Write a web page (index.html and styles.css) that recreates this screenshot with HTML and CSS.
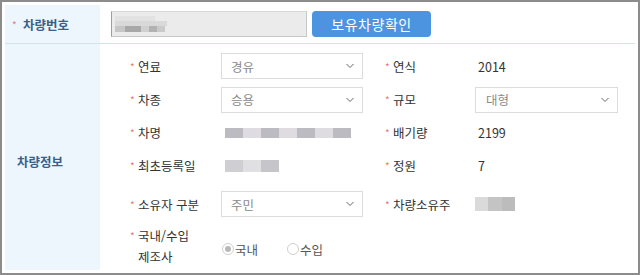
FILE: index.html
```html
<!DOCTYPE html>
<html lang="ko">
<head>
  <meta charset="UTF-8">
  <title>차량정보</title>
  <link rel="stylesheet" href="styles.css">
</head>
<body>
  <div class="frame">
    <div class="row row-top">
      <div class="head"><span class="req">*</span>차량번호</div>
      <div class="top-body">
        <div class="plate-input">
          <div class="mosaic plate-mosaic">
            <span class="m1"></span><span class="m2"></span><span class="m3"></span>
          </div>
        </div>
        <button class="btn" type="button">보유차량확인</button>
      </div>
    </div>

    <div class="row row-info">
      <div class="head head-info">차량정보</div>
      <div class="form-grid">
        <div class="label"><span class="req">*</span><span>연료</span></div>
        <div class="field"><div class="select">경유<svg class="chev" width="10" height="6" viewBox="0 0 10 6"><polyline points="1.5,1 5,4.5 8.5,1" /></svg></div></div>
        <div class="label"><span class="req">*</span><span>연식</span></div>
        <div class="field value">2014</div>

        <div class="label"><span class="req">*</span><span>차종</span></div>
        <div class="field"><div class="select">승용<svg class="chev" width="10" height="6" viewBox="0 0 10 6"><polyline points="1.5,1 5,4.5 8.5,1" /></svg></div></div>
        <div class="label"><span class="req">*</span><span>규모</span></div>
        <div class="field"><div class="select select-wide">대형<svg class="chev" width="10" height="6" viewBox="0 0 10 6"><polyline points="1.5,1 5,4.5 8.5,1" /></svg></div></div>

        <div class="label"><span class="req">*</span><span>차명</span></div>
        <div class="field"><div class="mosaic name-mosaic"><span></span><span></span><span></span><span></span><span></span><span></span><span></span></div></div>
        <div class="label"><span class="req">*</span><span>배기량</span></div>
        <div class="field value">2199</div>

        <div class="label"><span class="req">*</span><span>최초등록일</span></div>
        <div class="field"><div class="mosaic date-mosaic"><span></span><span></span><span></span></div></div>
        <div class="label"><span class="req">*</span><span>정원</span></div>
        <div class="field value">7</div>

        <div class="label"><span class="req">*</span><span>소유자 구분</span></div>
        <div class="field"><div class="select">주민<svg class="chev" width="10" height="6" viewBox="0 0 10 6"><polyline points="1.5,1 5,4.5 8.5,1" /></svg></div></div>
        <div class="label"><span class="req">*</span><span>차량소유주</span></div>
        <div class="field"><div class="mosaic owner-mosaic"><span></span><span></span><span></span></div></div>

        <div class="label label-two"><span class="req">*</span><span>국내/수입<br>제조사</span></div>
        <div class="field radios">
          <label class="radio"><span class="dot checked"></span>국내</label>
          <label class="radio"><span class="dot"></span>수입</label>
        </div>
      </div>
    </div>
  </div>
</body>
</html>
```

FILE: styles.css
```css
body {
  margin: 0;
  font-family: "Noto Sans CJK KR", "Noto Sans", sans-serif;
  color: #333;
  background: #fff;
}
.frame {
  width: 640px;
  height: 275px;
  box-sizing: border-box;
  border: 2px solid #8c8c8c;
  padding: 3px;
}
.row {
  display: flex;
}
.row-top {
  height: 38px;
  border-bottom: 1px solid #cfe5ec;
}
.head {
  width: 95px;
  box-sizing: border-box;
  background: #edf5fd;
  display: flex;
  align-items: center;
  padding-left: 7px;
  font-size: 12.5px;
  font-weight: bold;
  color: #3b5f86;
}
.head .req {
  margin-right: 3px;
}
.req {
  color: #e57b7b;
  font-size: 10px;
  font-weight: normal;
  width: 8px;
  flex: none;
}
.top-body {
  display: flex;
  align-items: center;
  gap: 5px;
  padding-left: 11px;
}
.plate-input {
  width: 196px;
  height: 26px;
  box-sizing: border-box;
  background: #ebebeb;
  border: 1px solid #c8c8c8;
  border-left-color: #9e9e9e;
  border-top-color: #d8d8d8;
  display: flex;
  align-items: center;
  padding-left: 3px;
}
.btn {
  width: 119px;
  height: 26px;
  border: none;
  border-radius: 4px;
  background: #4d94e0;
  color: #fff;
  font-family: inherit;
  font-size: 14px;
  padding: 0;
  letter-spacing: 0.5px;
}

.row-info {
  height: 226px;
}
.head-info {
  padding-left: 12px;
  padding-top: 8px;
}
.form-grid {
  display: grid;
  grid-template-columns: 91px 164px 90px 143px;
  grid-template-rows: 34px 33px 33px 33px 44px 1fr;
  align-items: center;
  padding: 5px 0 0 30px;
  font-size: 12.5px;
}
.label {
  display: flex;
  align-items: center;
  color: #333;
}
.label-two {
  align-items: flex-start;
  line-height: 21px;
  margin-top: -4px;
}
.value {
  padding-left: 3px;
  color: #333;
}
.select {
  width: 142px;
  height: 26px;
  box-sizing: border-box;
  border: 1px solid #dcdcdc;
  background: #fff;
  display: flex;
  align-items: center;
  justify-content: space-between;
  padding: 0 7px 0 9px;
  color: #8a8a8a;
}
.select-wide {
  width: 143px;
  padding-left: 10px;
}
.chev polyline {
  fill: none;
  stroke: #666;
  stroke-width: 1;
}

.mosaic {
  display: flex;
}
.mosaic span {
  display: block;
}
.plate-mosaic {
  flex-direction: column;
  width: 52px;
}
.plate-mosaic .m1 {
  height: 5px;
  width: 40px;
  background: #e2e2e2;
}
.plate-mosaic .m2 {
  height: 5px;
  width: 52px;
  background: #d9d9d9;
}
.plate-mosaic .m3 {
  height: 6px;
  width: 50px;
  background: linear-gradient(to right, #c6c6c6 0 10px, #a8a8a8 10px 26px, #d0d0d0 26px 34px, #b2b2b2 34px 42px, #cacaca 42px);
}
.name-mosaic {
  margin-left: 4px;
  height: 10px;
  width: 126px;
  background: #e7e5e9;
}
.name-mosaic span {
  height: 10px;
  width: 18px;
}
.name-mosaic span:nth-child(odd) {
  background: #bdbbc2;
}
.name-mosaic span:nth-child(even) {
  background: #dedce1;
}
.date-mosaic {
  margin-left: 4px;
  height: 12px;
  width: 54px;
}
.date-mosaic span {
  height: 12px;
  flex: 1;
}
.date-mosaic span:nth-child(1) { background: #cfcfd3; }
.date-mosaic span:nth-child(2) { background: #e0e0e2; }
.date-mosaic span:nth-child(3) { background: #c6c6ca; }
.owner-mosaic {
  height: 14px;
  width: 40px;
}
.owner-mosaic span {
  height: 14px;
  flex: 1;
}
.owner-mosaic span:nth-child(1) { background: #dadada; }
.owner-mosaic span:nth-child(2) { background: #c4c4c4; }
.owner-mosaic span:nth-child(3) { background: #bcbcbc; }

.radios {
  display: flex;
  gap: 29px;
  padding-left: 1px;
  padding-top: 2px;
  color: #555;
}
.radio {
  display: flex;
  align-items: center;
}
.dot {
  width: 12px;
  height: 12px;
  box-sizing: border-box;
  border: 1px solid #cfcfcf;
  border-radius: 50%;
  margin-right: 1px;
  position: relative;
}
.dot.checked::after {
  content: "";
  position: absolute;
  left: 2px;
  top: 2px;
  width: 6px;
  height: 6px;
  border-radius: 50%;
  background: #b8b8b8;
}
```
